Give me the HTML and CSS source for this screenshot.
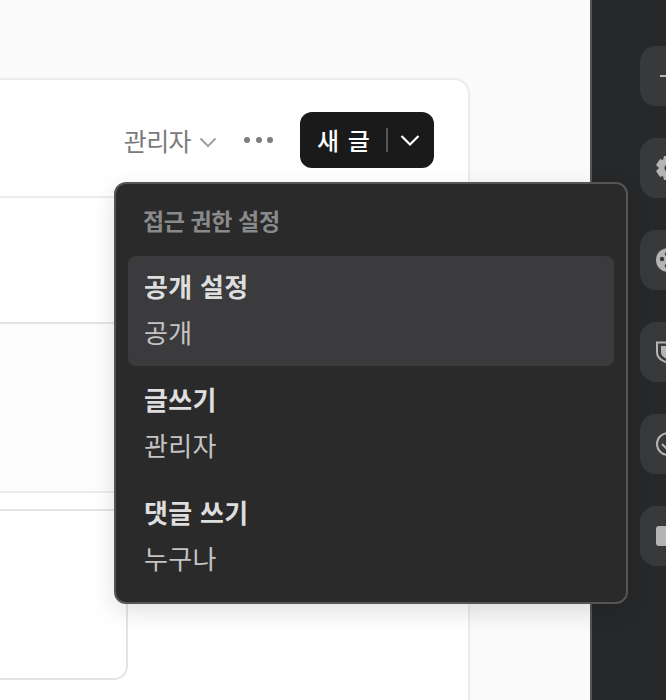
FILE: index.html
```html
<!DOCTYPE html>
<html lang="ko">
<head>
  <meta charset="UTF-8" />
  <meta name="viewport" content="width=device-width, initial-scale=1.0"/>
  <title>게시판 관리</title>
  <link rel="stylesheet" href="styles.css">
</head>
<body>

  <main class="content">
    <div class="board">

      <div class="board-head">
        <button class="role-select">
          관리자
          <svg class="chevron-small" width="18" height="18" viewBox="0 0 18 18"><path d="M1.500 5.500L9 13l7.500-7.500" fill="none" stroke="currentColor" stroke-width="2"/></svg>
        </button>
        <button class="more-button" aria-label="더 보기">
          <span class="dot"></span><span class="dot"></span><span class="dot"></span>
        </button>
        <div class="new-post">
          <span class="new-post-label">새 글</span>
          <span class="new-post-divider"></span>
          <svg width="20" height="20" viewBox="0 0 20 20"><path d="M1.500 6L10 14.500 18.500 6" fill="none" stroke="currentColor" stroke-width="2.200"/></svg>
        </div>
      </div>

      <div class="post-group">
        <div class="post-row post-row-short"></div>
        <div class="post-row post-row-tall"></div>
      </div>
      <div class="post-box"></div>

      <!-- Access menu -->
      <div class="access-menu">
        <div class="access-title">접근 권한 설정</div>
        <div class="access-item active">
          <strong>공개 설정</strong>
          <span>공개</span>
        </div>
        <div class="access-item">
          <strong>글쓰기</strong>
          <span>관리자</span>
        </div>
        <div class="access-item">
          <strong>댓글 쓰기</strong>
          <span>누구나</span>
        </div>
      </div>

    </div>
  </main>

  <aside class="sidebar">
    <div class="side-button">
      <svg width="26" height="26" viewBox="0 0 26 26"><path d="M5 13h16M13 5v16" fill="none" stroke="currentColor" stroke-width="2.200"/></svg>
    </div>
    <div class="side-button">
      <svg width="26" height="26" viewBox="0 0 26 26"><path fill="currentColor" d="M9 1h8l1 4 3-1 4 6-3 3 3 3-4 6-3-1-1 4H9l-1-4-3 1-4-6 3-3-3-3 4-6 3 1z"/><circle cx="13" cy="13" r="3.500" fill="#37393b"/></svg>
    </div>
    <div class="side-button">
      <svg width="26" height="26" viewBox="0 0 26 26"><circle cx="13" cy="13" r="12" fill="currentColor"/><circle cx="7" cy="12" r="2.200" fill="#37393b"/><circle cx="12" cy="7" r="2.200" fill="#37393b"/><circle cx="12" cy="19" r="2.200" fill="#37393b"/></svg>
    </div>
    <div class="side-button">
      <svg width="26" height="26" viewBox="0 0 26 26"><path d="M2 3.500h22v10c0 5-5 8.500-11 10.500C7 22 2 18.500 2 13.500z" fill="none" stroke="currentColor" stroke-width="2"/><path d="M6 7h14v6.500c0 3-3 5.500-7 7-4-1.500-7-4-7-7z" fill="currentColor"/></svg>
    </div>
    <div class="side-button">
      <svg width="26" height="26" viewBox="0 0 26 26"><circle cx="13" cy="13" r="11" fill="none" stroke="currentColor" stroke-width="2"/><path d="M7 13l4.500 4.500L20 9" fill="none" stroke="currentColor" stroke-width="2"/></svg>
    </div>
    <div class="side-button">
      <svg width="26" height="26" viewBox="0 0 26 26"><rect x="1" y="3" width="24" height="20" rx="3" fill="currentColor"/></svg>
    </div>
  </aside>

</body>
</html>
```

FILE: styles.css
```css
* {
  margin: 0;
  padding: 0;
  box-sizing: border-box;
}

html, body {
  height: 100%;
}

body {
  display: flex;
  width: 666px;
  height: 700px;
  overflow: hidden;
  font-family: "Noto Sans CJK KR", "Noto Sans", sans-serif;
  background-color: #fafafa;
  color: #1c1c1c;
}

.content {
  position: relative;
  z-index: 2;
  flex: 0 0 590px;
  padding-top: 78px;
}

.board {
  position: relative;
  width: 510px;
  height: 640px;
  margin-left: -40px;
  background-color: #ffffff;
  border: 2px solid #ececec;
  border-radius: 16px;
  box-shadow: 0 1px 6px rgba(0,0,0,0.02);
}

.board-head {
  display: flex;
  justify-content: flex-end;
  align-items: center;
  height: 116px;
  padding: 4px 34px 0 0;
}

button {
  background: none;
  border: none;
  font-family: inherit;
}

.role-select {
  display: flex;
  align-items: center;
  gap: 8px;
  font-size: 25px;
  letter-spacing: -0.6px;
  color: #7b7b7b;
}

.chevron-small {
  margin-top: 4px;
  color: #a0a0a0;
}

.more-button {
  display: flex;
  gap: 5.5px;
  margin: 0 27px 0 27px;
}

.dot {
  width: 6px;
  height: 6px;
  border-radius: 50%;
  background-color: #7d7d7d;
}

.new-post {
  display: flex;
  align-items: center;
  width: 134px;
  height: 56px;
  padding-left: 17px;
  background-color: #1a1a1a;
  border-radius: 12px;
  color: #ffffff;
}

.new-post-label {
  font-size: 24px;
  font-weight: 500;
  letter-spacing: 1px;
  line-height: 1;
}

.new-post-divider {
  width: 2px;
  height: 24px;
  margin: 0 12px 0 15px;
  background-color: #555555;
}

.post-group {
  width: 166px;
  height: 297px;
  border: 2px solid #ececec;
  border-left: none;
  border-right: none;
}

.post-row-short {
  height: 126px;
  border-bottom: 2px solid #e4e4e4;
  background-color: #ffffff;
}

.post-row-tall {
  height: 167px;
  background-color: #fdfdfd;
}

.post-box {
  width: 166px;
  height: 171px;
  margin-top: 16px;
  background-color: #ffffff;
  border: 2px solid #e4e4e4;
  border-left: none;
  border-radius: 0 0 14px 0;
}

.access-menu {
  position: absolute;
  top: 102px;
  left: 152px;
  width: 514px;
  height: 422px;
  padding: 0 12px;
  background-color: #2a2a2a;
  border: 2px solid #555555;
  border-radius: 12px;
  box-shadow: 0 8px 24px rgba(0,0,0,0.12);
}

.access-title {
  height: 72px;
  padding: 19px 15px 0;
  font-size: 23px;
  font-weight: 700;
  letter-spacing: -0.4px;
  color: #8a8a8a;
}

.access-item {
  display: flex;
  flex-direction: column;
  gap: 8px;
  height: 110px;
  margin-bottom: 3px;
  padding: 11px 16px 0;
  border-radius: 8px;
  font-size: 26px;
  letter-spacing: 0.3px;
  line-height: 38px;
}

.access-item.active {
  background-color: #3b3b3d;
}

.access-item strong {
  font-weight: 700;
  color: #dedede;
}

.access-item span {
  color: #c4c4c4;
}

.sidebar {
  display: flex;
  flex: 1;
  flex-direction: column;
  gap: 32px;
  padding: 46px 0 0 48px;
  background-color: #26282a;
  border-left: 2px solid #555555;
  overflow: hidden;
}

.side-button {
  display: flex;
  flex: none;
  align-items: center;
  width: 60px;
  height: 60px;
  padding-left: 15px;
  background-color: #37393b;
  border-radius: 16px;
  color: #b4b4b6;
}
```
